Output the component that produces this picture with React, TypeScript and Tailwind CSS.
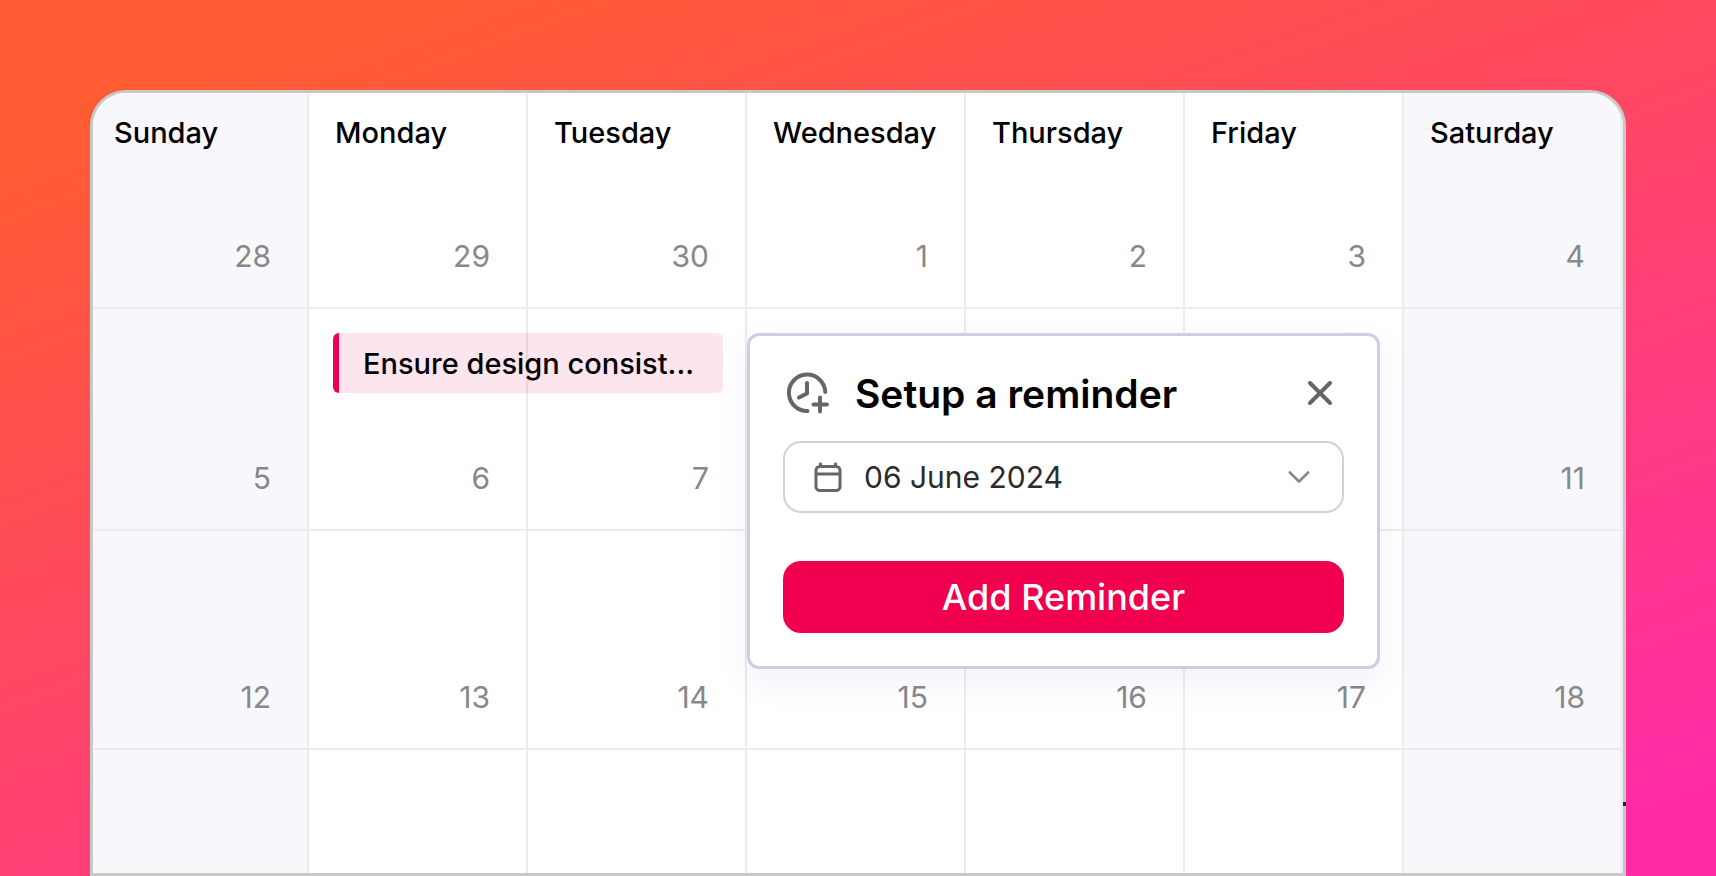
const dayNames = ['Sunday', 'Monday', 'Tuesday', 'Wednesday', 'Thursday', 'Friday', 'Saturday']

// days under the open popup are left blank
const weeks = [
    { height: 'h-[145px]', days: [28, 29, 30, 1, 2, 3, 4] },
    { height: 'h-[222px]', days: [5, 6, 7, null, null, null, 11], eventColumn: 1, popupColumn: 3 },
    { height: 'h-[219px]', days: [12, 13, 14, 15, 16, 17, 18] },
    { height: 'h-[123px]', days: [null, null, null, null, null, null, null] },
]

const isWeekend = (column: number) => column === 0 || column === 6

const ClockPlusIcon = () => (
    <svg className="size-[42px] shrink-0" viewBox="0 0 42 42" fill="none" stroke="#666" strokeWidth="4" strokeLinecap="round" strokeLinejoin="round" aria-hidden="true">
        <path d="M38.3 20A18.2 18.2 0 1 0 20.5 39" />
        <path d="M20 11V21.500L12 25.500" />
        <path d="M33 25.500V39.500M26.500 32.500H40" />
    </svg>
)

const CalendarIcon = () => (
    <svg className="h-[30px] w-7 shrink-0" viewBox="0 0 28 30" fill="none" stroke="#666" strokeWidth="3" strokeLinecap="round" strokeLinejoin="round" aria-hidden="true">
        <rect x="2" y="4.500" width="24" height="24" rx="4" />
        <path d="M2 12H26M6.500 1.800V4M21.500 1.800V4" />
    </svg>
)

const CloseIcon = () => (
    <svg className="size-6" viewBox="0 0 24 24" fill="none" stroke="#666" strokeWidth="4" strokeLinecap="round" aria-hidden="true">
        <path d="M2 2L22 22M22 2L2 22" />
    </svg>
)

const ChevronIcon = () => (
    <svg className="h-3 w-[22px] shrink-0" viewBox="0 0 22 12" fill="none" stroke="#888" strokeWidth="2.600" strokeLinecap="round" strokeLinejoin="round" aria-hidden="true">
        <path d="M1.800 1.500L11 10.500L20.200 1.500" />
    </svg>
)

const EventChip = () => (
    <a href="#event" className="absolute top-6 left-6 z-10 flex h-[60px] w-[calc(200%-44px)] items-center rounded-md border-l-6 border-[#f0004f] bg-[#f0004f]/10 pt-0.5 pl-6 text-[29px] leading-9 font-medium whitespace-nowrap text-black">
        Ensure design consist...
    </a>
)

const ReminderPopup = () => (
    <div role="dialog" aria-labelledby="reminder-title" className="absolute top-6 left-0 z-20 w-[calc(300%-18px)] rounded-xl border-3 border-[#cdcdea] bg-white p-[33px] text-left shadow-[0_12px_36px_rgba(80,70,160,0.08)]">
        {/* title row */}
        <div className="flex h-12 items-center pr-3 pl-1">
            <ClockPlusIcon />
            <h2 id="reminder-title" className="ml-[26px] pt-0.5 text-[39px] leading-12 font-semibold text-black">Setup a reminder</h2>
            <button type="button" aria-label="Close" className="ml-auto cursor-pointer">
                <CloseIcon />
            </button>
        </div>

        {/* date picker */}
        <button type="button" aria-haspopup="dialog" className="mt-6 flex h-[72px] w-full cursor-pointer items-center rounded-[18px] border-2 border-[#d2d2d2] pr-8 pl-[29px]">
            <CalendarIcon />
            <span className="ml-[22px] text-[30px] leading-9 text-[#2b2b2b]">06 June 2024</span>
            <span className="ml-auto">
                <ChevronIcon />
            </span>
        </button>

        <button type="button" className="mt-12 h-[72px] w-full cursor-pointer rounded-[18px] bg-[#f0004f] text-[36px] leading-12 font-medium text-white">
            Add Reminder
        </button>
    </div>
)

const Calendar = () => (
    <div className="relative rounded-t-[36px] border-3 border-[#c8c8c8] bg-white">
        <table className="w-full table-fixed border-separate border-spacing-0">
            <colgroup>
                <col className="w-[14.12%]" />
                <col span={6} />
            </colgroup>
            <thead>
                <tr className="h-[71px]">
                    {dayNames.map((name, column) => (
                        <th
                            key={name}
                            scope="col"
                            className={`border-r-2 border-[#ececec] p-0 pt-[22px] text-left align-top text-[29px] leading-9 font-medium text-black first:rounded-tl-[33px] last:rounded-tr-[33px] ${column === 0 ? 'pl-[21px]' : 'pl-[26px]'} ${isWeekend(column) ? 'bg-[#f8f7fc]' : 'bg-white'}`}
                        >
                            {name}
                        </th>
                    ))}
                </tr>
            </thead>
            <tbody>
                {weeks.map((week, row) => (
                    <tr key={row} className={week.height}>
                        {week.days.map((day, column) => (
                            <td
                                key={column}
                                className={`relative border-r-2 border-[#ececec] p-0 pr-9 pb-[33px] text-right align-bottom text-[30px] leading-9 text-[#888] ${row < weeks.length - 1 ? 'border-b-2' : ''} ${isWeekend(column) ? 'bg-[#f8f7fc]' : 'bg-white'}`}
                            >
                                {day}
                                {column === week.eventColumn && <EventChip />}
                                {column === week.popupColumn && <ReminderPopup />}
                            </td>
                        ))}
                    </tr>
                ))}
            </tbody>
        </table>

        {/* edge marker */}
        <span className="absolute -right-[3px] bottom-[67px] h-1 w-[3px] bg-[#222]" />
    </div>
)

const App = () => {
    return (
        <main className="min-h-screen bg-[linear-gradient(160deg,#ff5c33_10%,#ff2ba5_94%)] p-[90px] pb-0 font-[Inter,sans-serif]">
            <Calendar />
        </main>
    )
}

export default App
